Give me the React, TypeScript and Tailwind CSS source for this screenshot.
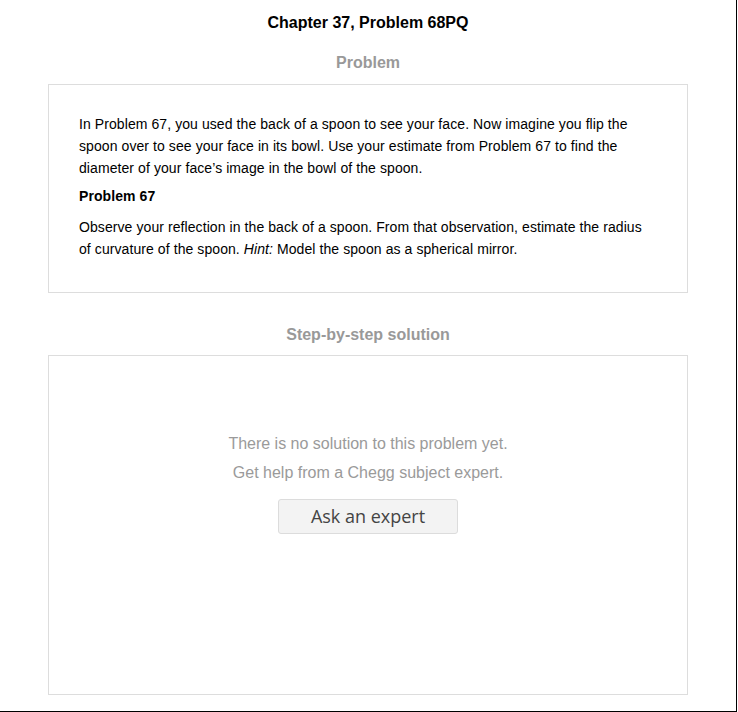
import React from "react";

const App = () => {
  return (
    <div
      className="w-[737px] h-[712px] border-r border-b border-black bg-white px-12 box-border"
      style={{ fontFamily: '"Liberation Sans", Arial, sans-serif' }}
    >
      {/* TITLE */}
      <h1 className="pt-[13px] text-center text-[16px] leading-[20px] font-bold text-black">
        Chapter 37, Problem 68PQ
      </h1>

      {/* PROBLEM */}
      <h2 className="mt-[20px] text-center text-[16px] leading-[20px] font-bold text-[#999999]">
        Problem
      </h2>
      <div className="mt-[11px] border border-[#dddddd] pl-[30px] pr-[40px] pt-[28px] pb-[32px] text-[14px] leading-[22px] tracking-[0.08px] text-black">
        <p>
          In Problem 67, you used the back of a spoon to see your face. Now imagine you flip the spoon
          over to see your face in its bowl. Use your estimate from Problem 67 to find the diameter of
          your face’s image in the bowl of the spoon.
        </p>
        <p className="mt-[6px] font-bold">Problem 67</p>
        <p className="mt-[9px]">
          Observe your reflection in the back of a spoon. From that observation, estimate the radius of
          curvature of the spoon. <em>Hint:</em> Model the spoon as a spherical mirror.
        </p>
      </div>

      {/* SOLUTION */}
      <h2 className="mt-[32px] text-center text-[16px] leading-[20px] font-bold text-[#999999]">
        Step-by-step solution
      </h2>
      <div className="mt-[10px] h-[340px] border border-[#dddddd] pt-[73px] flex flex-col items-center text-[16px] leading-[29px] text-[#9a9a9a]">
        <p>There is no solution to this problem yet.</p>
        <p>Get help from a Chegg subject expert.</p>
        <button
          className="mt-[12px] w-[180px] h-[35px] rounded-[3px] border border-[#dcdcdc] bg-[#f3f3f3] text-[18px] text-[#444444]"
          style={{ fontFamily: '"Open Sans", "Noto Sans", sans-serif' }}
        >
          Ask an expert
        </button>
      </div>
    </div>
  );
};

export default App;
